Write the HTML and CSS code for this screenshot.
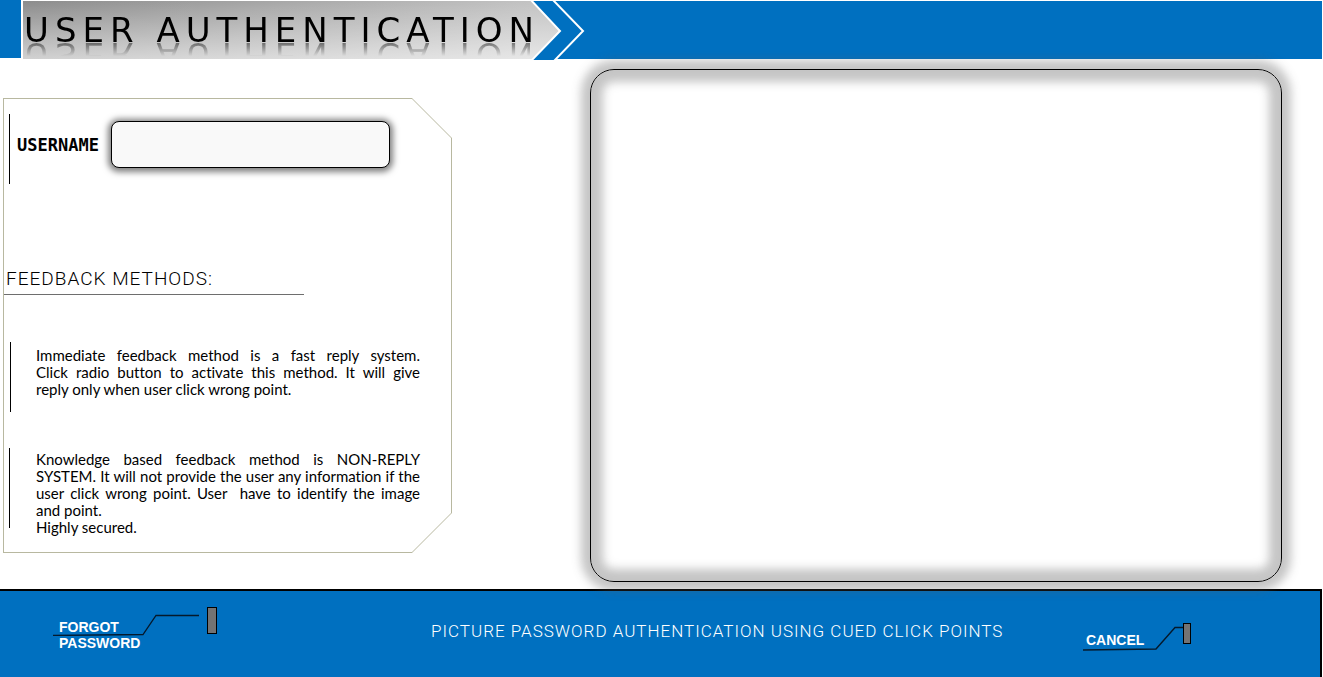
FILE: index.html
```html
<!DOCTYPE html>
<html lang="en">
<head>
<meta charset="utf-8">
<title>User Authentication</title>
<link rel="stylesheet" href="styles.css">
</head>
<body>
<header class="topbar">
  <div class="topbar-edge"></div>
  <div class="banner">
    <h1 class="banner-title">USER AUTHENTICATION</h1>
  </div>
  <div class="topbar-fill">
    <svg class="chevrons" width="56" height="59" viewBox="0 0 56 59" aria-hidden="true">
      <defs>
        <linearGradient id="tip" x1="0" y1="0" x2="0" y2="1">
          <stop offset="0" stop-color="#c2c2c2"/>
          <stop offset="1" stop-color="#e7e7e7"/>
        </linearGradient>
      </defs>
      <path d="M0 0H4L31 30L4 58H0Z" fill="url(#tip)"/>
      <path d="M0 -2L30 30L1 60H24L55 30L24 -2Z" fill="#0070c0"/>
      <path d="M0 -2L30 30L1 60" fill="none" stroke="#fff" stroke-width="2"/>
      <path d="M22 -2L53 30L24 60" fill="none" stroke="#fff" stroke-width="2"/>
    </svg>
  </div>
</header>

<main class="content">
  <section class="card">
    <div class="card-body">
      <form class="field">
        <label class="field-label" for="username">USERNAME</label>
        <input class="field-input" id="username" type="text" autocomplete="off">
      </form>
      <h2 class="section-title">FEEDBACK METHODS:</h2>
      <div class="note note-immediate">
        <p class="note-text">
          <span class="line">Immediate feedback method is a fast reply system.</span>
          <span class="line">Click radio button to activate this method. It will give</span>
          <span class="line last">reply only when user click wrong point.</span>
        </p>
      </div>
      <div class="note note-knowledge">
        <p class="note-text">
          <span class="line">Knowledge based feedback method is NON-REPLY</span>
          <span class="line">SYSTEM. It will not provide the user any information if the</span>
          <span class="line">user click wrong point. User&nbsp; have to identify the image</span>
          <span class="line last">and point.</span>
          <span class="line last">Highly secured.</span>
        </p>
      </div>
    </div>
  </section>
  <section class="picture-frame" aria-label="Picture"></section>
</main>

<footer class="bottombar">
  <button class="action forgot" type="button">
    <svg class="action-art" width="166" height="30" viewBox="0 0 166 30" aria-hidden="true">
      <path d="M0 29.5L90 28.500L103 9.500H146" fill="none" stroke="#05192b" stroke-width="1.300"/>
      <rect x="154.500" y="1.500" width="9" height="26" fill="#737373" stroke="#000"/>
    </svg>
    <span class="action-text">FORGOT<br>PASSWORD</span>
  </button>
  <p class="tagline">PICTURE PASSWORD AUTHENTICATION USING CUED CLICK POINTS</p>
  <button class="action cancel" type="button">
    <svg class="action-art" width="108" height="30" viewBox="0 0 108 30" aria-hidden="true">
      <path d="M0 28L73 27L92 5.500H100" fill="none" stroke="#05192b" stroke-width="1.400"/>
      <rect x="100.500" y="1.500" width="7" height="20" fill="#737373" stroke="#000"/>
    </svg>
    <span class="action-text">CANCEL</span>
  </button>
</footer>
</body>
</html>
```
FILE: styles.css
```css
* {
  box-sizing: border-box;
}

body {
  margin: 0;
  min-height: 100vh;
  display: flex;
  flex-direction: column;
  background: #fff;
  color: #000;
  font-family: "Century Gothic", Lato, sans-serif;
}

h1, h2, p {
  margin: 0;
  font-weight: 400;
}

/* Top bar */
.topbar {
  display: flex;
  height: 59px;
  padding-right: 1px;
}

.topbar-edge {
  width: 21px;
  height: 58px;
  margin-right: 2px;
  background: #0070c0;
}

.banner {
  width: 507px;
  margin-top: 1px;
  padding: 14px 0 0 1px;
  background:
    linear-gradient(to bottom, rgba(255, 255, 255, 0), rgba(255, 255, 255, 0.6)),
    linear-gradient(to right, #8c8c8c, #c2c2c2);
}

.banner-title {
  height: 28px;
  font-family: "DejaVu Sans", sans-serif;
  font-size: 34px;
  line-height: 31px;
  letter-spacing: 6px;
  white-space: nowrap;
  -webkit-box-reflect: below -1px linear-gradient(to top, rgba(0, 0, 0, 0.5), transparent 50%);
}

.topbar-fill {
  flex: 1;
  margin-top: 1px;
  background: #0070c0;
}

.chevrons {
  display: block;
}

/* Main area */
.content {
  position: relative;
  flex: 1;
  display: flex;
  padding: 10px 41px 7px 3px;
}

.card {
  flex: 0 0 449px;
  align-self: flex-start;
  margin-top: 29px;
  padding: 1px;
  background: #b8b8a0;
  clip-path: polygon(0 0, calc(100% - 40px) 0, 100% 40px, 100% calc(100% - 40px), calc(100% - 40px) 100%, 0 100%);
}

.card-body {
  padding: 15px 31px 16px 0;
  background: #fff;
  clip-path: polygon(0 0, calc(100% - 39px) 0, 100% 39px, 100% calc(100% - 39px), calc(100% - 39px) 100%, 0 100%);
}

.field {
  display: flex;
  height: 70px;
  margin-left: 5px;
  padding: 7px 0 16px 7px;
  border-left: 1px solid #000;
}

.field-label {
  width: 94px;
  font-family: "DejaVu Sans Mono", monospace;
  font-size: 17px;
  font-weight: 700;
  line-height: 48px;
}

.field-input {
  width: 279px;
  height: 47px;
  padding: 0 12px;
  border: 1px solid #000;
  border-radius: 8px;
  background: #f9f9f9;
  box-shadow: 0 1px 6px 3px rgba(0, 0, 0, 0.5);
  font-size: 16px;
}

.section-title {
  width: 300px;
  margin-top: 82px;
  padding: 0 0 2px 2px;
  border-bottom: 1px solid #6e6e6e;
  font-family: Roboto, sans-serif;
  font-size: 19px;
  font-weight: 300;
  line-height: 26px;
  letter-spacing: 1px;
  white-space: nowrap;
}

.note {
  display: flex;
  align-items: flex-start;
}

.note::before {
  content: "";
  width: 1px;
  background: #000;
}

.note-immediate {
  margin: 47px 0 0 6px;
}

.note-immediate::before {
  height: 70px;
  margin-right: 25px;
}

.note-knowledge {
  margin: 36px 0 0 5px;
}

.note-knowledge::before {
  height: 80px;
  margin-right: 26px;
}

.note-text {
  flex: 1;
  padding-top: 5px;
  font-size: 15px;
  font-variant-ligatures: none;
  line-height: 17px;
}

.note-knowledge .note-text {
  padding-top: 3px;
}

.line {
  display: block;
  text-align: justify;
  text-align-last: justify;
}

.line.last {
  text-align-last: left;
}

.picture-frame {
  flex: 1;
  margin-left: 138px;
  border: 1px solid #000;
  border-radius: 24px;
  box-shadow:
    0 0 10px 9px rgba(90, 90, 90, 0.35),
    inset 0 0 10px 12px rgba(90, 90, 90, 0.35);
}

/* Bottom bar */
.bottombar {
  display: grid;
  grid-template-columns: 378px 1fr auto;
  align-items: start;
  min-height: 88px;
  margin-right: 1px;
  padding: 15px 129px 0 53px;
  border-top: 2px solid #000;
  border-right: 2px solid #000;
  background: #0070c0;
  color: #fff;
}

.action {
  position: relative;
  justify-self: start;
  padding: 0;
  border: 0;
  background: none;
  color: #fff;
  font-family: "Liberation Sans", sans-serif;
  font-size: 14px;
  font-weight: 700;
  line-height: 16px;
  text-align: left;
  cursor: pointer;
}

.action-art {
  position: absolute;
  top: 0;
  left: 0;
}

.action-text {
  position: relative;
}

.forgot {
  width: 166px;
  padding: 13px 0 0 6px;
}

.cancel {
  width: 108px;
  margin-top: 16px;
  padding: 10px 0 0 3px;
}

.tagline {
  padding-top: 13px;
  font-family: Roboto, sans-serif;
  font-size: 17px;
  font-weight: 300;
  line-height: 24px;
  letter-spacing: 1px;
  white-space: nowrap;
}
```
